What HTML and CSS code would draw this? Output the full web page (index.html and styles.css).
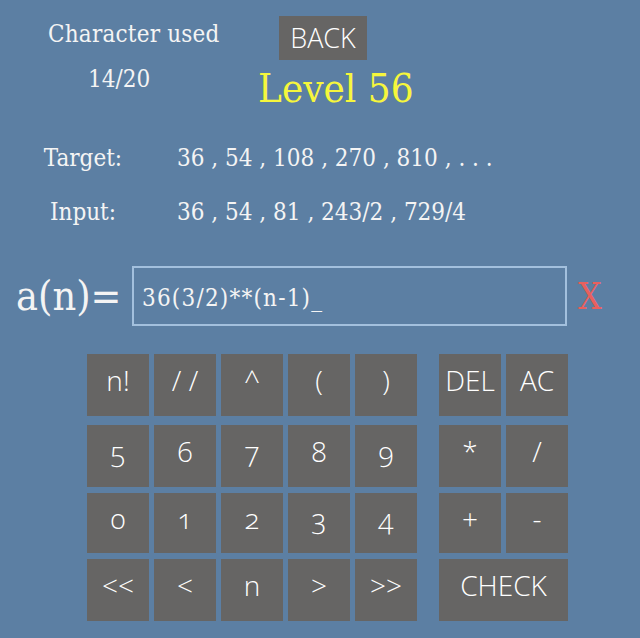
FILE: index.html
```html
<!DOCTYPE html>
<html>
<head>
<meta charset="utf-8">
<link rel="stylesheet" href="styles.css">
</head>
<body>
<div class="screen">
  <header class="header">
    <div class="counter">
      <div class="counter-label">Character used</div>
      <div class="counter-value">14/20</div>
    </div>
    <div class="level-col">
      <button class="back">BACK</button>
      <div class="level">Level 56</div>
    </div>
  </header>

  <section class="sequences">
    <div class="seq-label">Target:</div>
    <div class="seq-values">36 , 54 , 108 , 270 , 810 , . . .</div>
    <div class="seq-label">Input:</div>
    <div class="seq-values">36 , 54 , 81 , 243/2 , 729/4</div>
  </section>

  <section class="formula">
    <div class="formula-name">a(n)=</div>
    <div class="formula-box">36(3/2)**(n-1)_</div>
    <div class="wrong">X</div>
  </section>

  <section class="keypad">
    <div class="keys main">
      <div class="key top">n!</div>
      <div class="key top">/ /</div>
      <div class="key top">^</div>
      <div class="key top">(</div>
      <div class="key top">)</div>
      <div class="key">5</div>
      <div class="key">6</div>
      <div class="key">7</div>
      <div class="key">8</div>
      <div class="key">9</div>
      <div class="key">0</div>
      <div class="key">1</div>
      <div class="key">2</div>
      <div class="key">3</div>
      <div class="key">4</div>
      <div class="key">&lt;&lt;</div>
      <div class="key">&lt;</div>
      <div class="key">n</div>
      <div class="key">&gt;</div>
      <div class="key">&gt;&gt;</div>
    </div>
    <div class="keys side">
      <div class="key top">DEL</div>
      <div class="key top">AC</div>
      <div class="key">*</div>
      <div class="key">/</div>
      <div class="key">+</div>
      <div class="key">-</div>
      <div class="key wide">CHECK</div>
    </div>
  </section>
</div>
</body>
</html>
```

FILE: styles.css
```css
html, body {
  margin: 0;
  padding: 0;
}

body {
  background: #5c7fa3;
  width: 640px;
  height: 638px;
  overflow: hidden;
  font-family: "DejaVu Serif Condensed", "DejaVu Serif", serif;
  font-stretch: condensed;
  color: #f4f4f4;
}

.screen {
  display: flex;
  flex-direction: column;
}

.header {
  display: flex;
  padding-top: 16px;
}

.counter {
  width: 258px;
  padding-left: 48px;
  box-sizing: border-box;
  font-size: 24px;
  line-height: 28px;
}

.counter-label {
  margin-top: 4px;
  letter-spacing: 0.2px;
}

.counter-value {
  margin-top: 17px;
  margin-left: 40px;
}

.level-col {
  display: flex;
  flex-direction: column;
  align-items: flex-start;
}

.back {
  margin-left: 21px;
  width: 88px;
  height: 44px;
  border: none;
  padding: 0 0 2px 0;
  background: #666564;
  color: #ffffff;
  font-family: "Open Sans", sans-serif;
  font-stretch: normal;
  font-weight: 300;
  font-size: 27px;
  line-height: 44px;
}

.level {
  margin-top: 5px;
  font-size: 40px;
  line-height: 46px;
  color: #f6f63c;
}

.sequences {
  display: grid;
  grid-template-columns: 80px 1fr;
  column-gap: 54px;
  row-gap: 26px;
  margin-top: 33px;
  padding-left: 43px;
  font-size: 24px;
  line-height: 28px;
}

.seq-label {
  text-align: center;
}

.formula {
  display: flex;
  align-items: center;
  margin-top: 40px;
  padding-left: 16px;
}

.formula-name {
  width: 116px;
  font-size: 41px;
  line-height: 46px;
  padding-top: 0;
}

.formula-box {
  width: 435px;
  height: 60px;
  box-sizing: border-box;
  border: 2px solid #a3c0dd;
  padding: 0 8px;
  font-size: 24px;
  letter-spacing: 1.2px;
  line-height: 56px;
  padding-top: 2px;
}

.wrong {
  margin-left: 11px;
  font-size: 37px;
  line-height: 46px;
  color: #e8605e;
  padding-top: 2px;
}

.keypad {
  display: flex;
  align-items: flex-start;
  margin-top: 28px;
  padding-left: 87px;
}

.keys {
  display: grid;
  grid-template-rows: 65px 62px 60px 62px;
  grid-auto-columns: 62px;
  row-gap: 6px;
  column-gap: 5px;
}

.main {
  grid-template-columns: repeat(5, 62px);
}

.side {
  grid-template-columns: repeat(2, 62px);
  margin-left: 22px;
}

.key {
  display: flex;
  align-items: center;
  justify-content: center;
  background: #666564;
  color: #ffffff;
  font-family: "Open Sans", sans-serif;
  font-stretch: normal;
  font-weight: 300;
  font-size: 28px;
  line-height: 29px;
  font-variant-numeric: oldstyle-nums;
  padding-bottom: 10px;
  box-sizing: border-box;
}

.key.top {
  align-self: start;
  height: 62px;
}

.key.wide {
  grid-column: span 2;
}
```
